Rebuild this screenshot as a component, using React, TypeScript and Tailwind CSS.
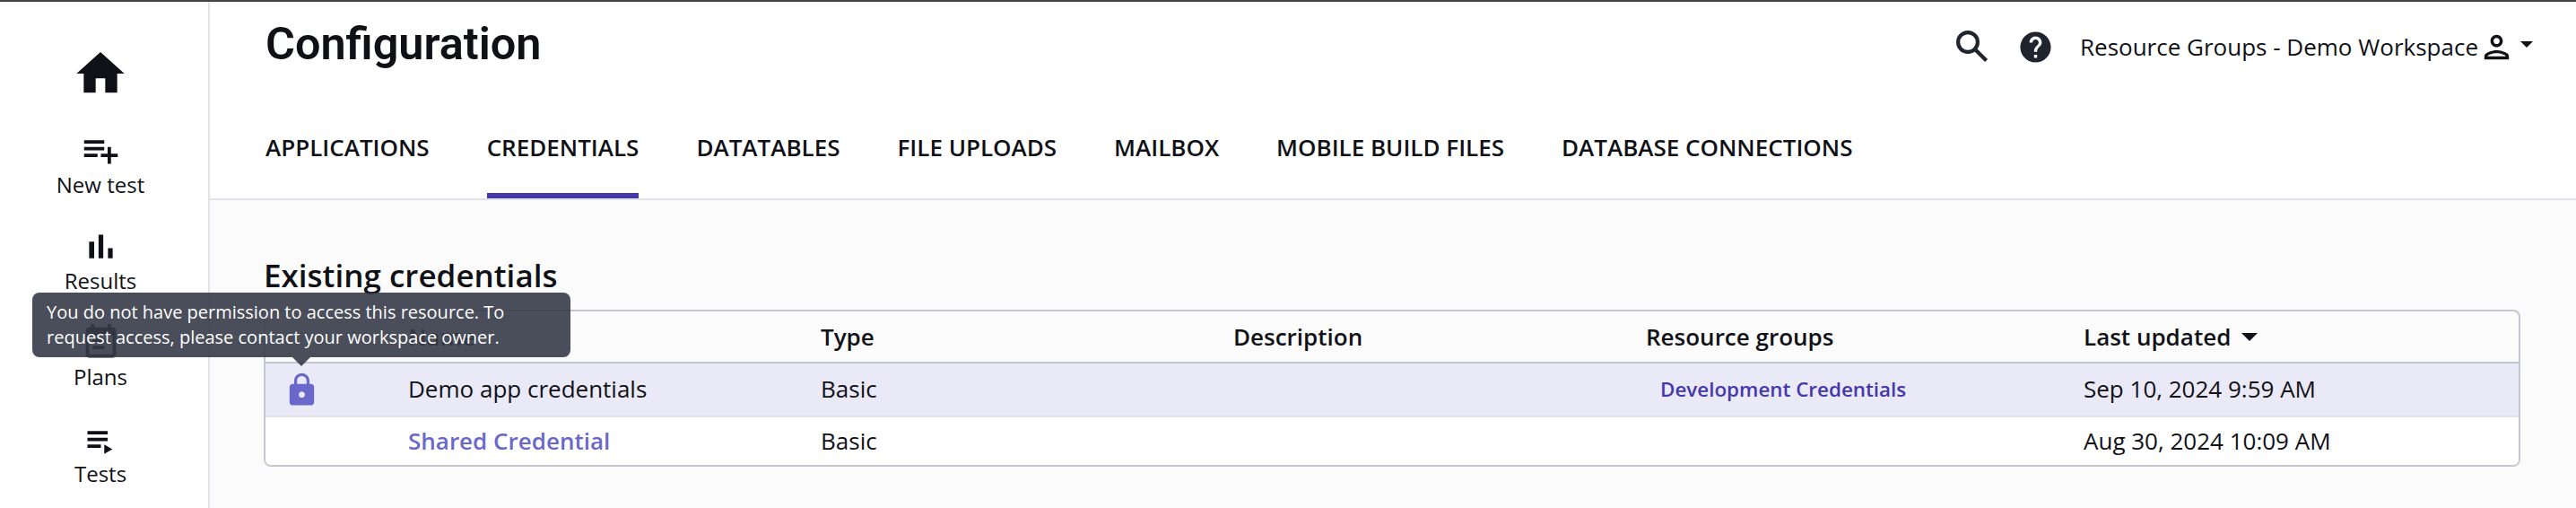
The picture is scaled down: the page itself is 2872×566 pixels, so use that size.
import React from 'react';
import { MdEventNote, MdHelp, MdHome, MdLock, MdOutlinePerson } from 'react-icons/md';

type IconProps = { className?: string };

const SearchIcon = ({ className }: IconProps) => (
  <svg viewBox="0 0 48 48" fill="none" stroke="currentColor" strokeWidth="4.2" className={className}>
    <circle cx="19" cy="19" r="10.9" />
    <path d="M27.5 27.5L39.6 39.6" />
  </svg>
);

const AddListIcon = ({ className }: IconProps) => (
  <svg viewBox="0 0 24 24" fill="currentColor" className={className}>
    <path d="M14 10H2v2h12v-2zm0-4H2v2h12V6zm4 8v-4h-2v4h-4v2h4v4h2v-4h4v-2h-4zM2 16h8v-2H2v2z" />
  </svg>
);

const BarsIcon = ({ className }: IconProps) => (
  <svg viewBox="0 0 24 24" fill="currentColor" className={className}>
    <path d="M5 9.2h3V19H5zM10.6 5h2.8v14h-2.8zm5.6 8H19v6h-2.8z" />
  </svg>
);

const PlayListIcon = ({ className }: IconProps) => (
  <svg viewBox="0 0 24 24" fill="currentColor" className={className}>
    <path d="M4 7h12v2H4zM4 11h12v2H4zM4 15h8v2H4zM14 15v5.6l4.8-2.8z" />
  </svg>
);

const Caret = ({ className }: IconProps) => (
  <svg viewBox="0 0 10 5" fill="currentColor" className={className}>
    <path d="M0 0h10L5 5z" />
  </svg>
);

const navItems = [
  { icon: AddListIcon, label: 'New test' },
  { icon: BarsIcon, label: 'Results' },
  { icon: MdEventNote, label: 'Plans' },
  { icon: PlayListIcon, label: 'Tests' },
];

const tabs = [
  'Applications',
  'Credentials',
  'Datatables',
  'File uploads',
  'Mailbox',
  'Mobile build files',
  'Database connections',
];

const credentials = [
  { name: 'Demo app credentials', type: 'Basic', group: 'Development Credentials', updated: 'Sep 10, 2024 9:59 AM', locked: true },
  { name: 'Shared Credential', type: 'Basic', group: '', updated: 'Aug 30, 2024 10:09 AM', locked: false },
];

const Sidebar: React.FC = () => (
  <aside className="w-[234px] shrink-0 border-r-2 border-[#e2e2e8] bg-white pr-2 pt-[48px]">
    <MdHome className="mx-auto size-16" />
    <nav className="mt-[31px] flex flex-col items-center gap-[30.2px]">
      {navItems.map((item) => (
        <a key={item.label} className="flex flex-col items-center">
          <item.icon className="size-[45px]" />
          <span className="text-[24px] leading-8">{item.label}</span>
        </a>
      ))}
    </nav>
  </aside>
);

const Header: React.FC = () => (
  <header className="h-[221px] border-b-2 border-[#e2e2e8] bg-white">
    <div className="flex h-[100px] items-center justify-between pl-[62px] pr-[48px]">
      <h1 className="pb-[6px] font-['Roboto'] text-[50.4px] font-[560] leading-[60px]">Configuration</h1>
      <div className="flex items-center">
        <SearchIcon className="size-12 text-[#20242f]" />
        <MdHelp className="ml-[26px] size-[41px] text-[#20242f]" />
        <span className="ml-[29px] text-[26px] leading-9">Resource Groups - Demo Workspace</span>
        <MdOutlinePerson className="size-[41px]" />
        <Caret className="mb-[5px] ml-[6px] h-[7px] w-[14px]" />
      </div>
    </div>
    <ul className="flex h-[119px] gap-16 pl-[62px]">
      {tabs.map((tab) => (
        <li
          key={tab}
          className={
            tab === 'Credentials'
              ? 'border-b-[6px] border-[#4538aa] pt-[44px] text-[26px] font-semibold uppercase leading-9'
              : 'pt-[44px] text-[26px] font-semibold uppercase leading-9'
          }
        >
          {tab}
        </li>
      ))}
    </ul>
  </header>
);

const Tooltip: React.FC = () => (
  <div className="absolute bottom-[56.5px] left-[-260px] z-10 w-[600px] rounded-lg bg-[#363b48]/90 px-4 py-2 text-[20px] leading-7 text-white">
    You do not have permission to access this resource. To request access, please contact your workspace owner.
    <Caret className="absolute left-[290px] top-full h-[10px] w-[20px] text-[#363b48]/90" />
  </div>
);

const CredentialsTable: React.FC = () => (
  <div className="w-[2516px] rounded-lg border-2 border-[#c6c6ce] text-[26px] leading-9">
    <div className="grid h-[58px] grid-cols-[159px_460px_460px_460px_488px_1fr] items-center border-b-2 border-[#c6c6ce] font-semibold">
      <span />
      <span>Name</span>
      <span>Type</span>
      <span>Description</span>
      <span>Resource groups</span>
      <span className="flex items-center gap-3">
        Last updated <Caret className="h-[9px] w-[18px]" />
      </span>
    </div>
    {credentials.map((row) => (
      <div
        key={row.name}
        className={
          row.locked
            ? 'grid h-[60px] grid-cols-[159px_460px_460px_460px_488px_1fr] items-center border-b-2 border-[#e2e2e8] bg-[#eae9f7]'
            : 'grid h-[53px] grid-cols-[159px_460px_460px_460px_488px_1fr] items-center rounded-b-md bg-white'
        }
      >
        <span className="relative pl-5">
          {row.locked && (
            <>
              <MdLock className="size-[41px] text-[#6b68cb]" />
              <Tooltip />
            </>
          )}
        </span>
        <span className={row.locked ? 'pb-[2px]' : 'pb-[2px] font-semibold text-[#6b68cb]'}>{row.name}</span>
        <span className="pb-[2px]">{row.type}</span>
        <span />
        <span className="pb-px pl-4 text-[22.4px] font-semibold text-[#4538aa]">{row.group}</span>
        <span className="pb-[2px]">{row.updated}</span>
      </div>
    ))}
  </div>
);

export default function App() {
  return (
    <div className="flex h-[566px] overflow-hidden border-t-2 border-[#444444] bg-[#fbfbfc] font-['Open_Sans',sans-serif] text-[#101116]">
      <Sidebar />
      <div className="min-w-0 flex-1">
        <Header />
        <main className="pl-[60px] pt-[60px]">
          <h2 className="mb-[14px] text-[35px] font-semibold leading-[48px]">Existing credentials</h2>
          <CredentialsTable />
        </main>
      </div>
    </div>
  );
}
